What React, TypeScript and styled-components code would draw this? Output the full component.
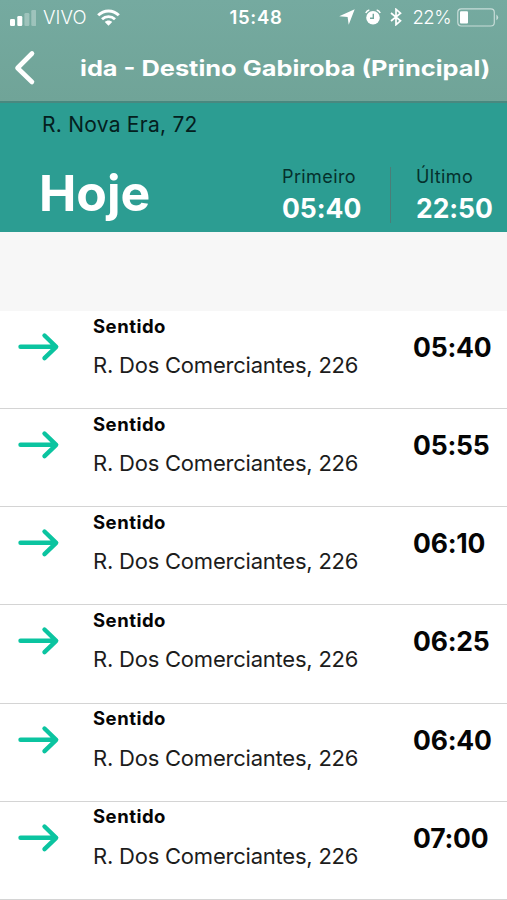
import React from "react";
import styled, { createGlobalStyle } from "styled-components";

const GlobalStyle = createGlobalStyle`
  * { box-sizing: border-box; }
  html, body { margin: 0; padding: 0; overflow: hidden; background: #fff; }
  body { font-family: Inter, "Liberation Sans", sans-serif; color: #050505; }
`;

const Screen = styled.main`
  width: 507px;
  height: 900px;
  overflow: hidden;
  background: #fff;
`;

const Header = styled.header`
  height: 103px;
  background: linear-gradient(#75aaa0, #70a498);
  border-bottom: 2px solid #49887f;
  color: #fff;
`;

const StatusBar = styled.div`
  height: 34px;
  display: grid;
  grid-template-columns: 1fr auto 1fr;
  align-items: center;
  padding: 0 8px 0 10px;
`;

const StatusGroup = styled.div<{ $end?: boolean }>`
  display: flex;
  align-items: center;
  justify-content: ${(p) => (p.$end ? "flex-end" : "flex-start")};
`;

const Carrier = styled.span`
  font-size: 18.5px;
  font-weight: 300;
  letter-spacing: 0.1px;
  margin: 0 10px 0 7px;
`;

const Clock = styled.span`
  font-size: 18.5px;
  font-weight: 600;
  letter-spacing: 0.7px;
  padding-left: 3px;
`;

const Percent = styled.span`
  font-size: 18.5px;
  font-weight: 300;
  letter-spacing: -0.5px;
  margin: 0 6px 0 10px;
`;

const NavBar = styled.div`
  height: 67px;
  display: flex;
  align-items: center;
  padding-left: 13px;
`;

const BackButton = styled.button`
  width: 24px;
  height: 40px;
  padding: 0;
  border: 0;
  background: none;
  color: inherit;
  flex: none;
`;

const Title = styled.h1`
  margin: 0 0 0 43px;
  font-size: 21.5px;
  line-height: 30px;
  font-weight: 650;
  white-space: nowrap;
  transform: scaleX(1.18);
  transform-origin: left center;
`;

const Summary = styled.section`
  height: 129px;
  background: #2c9d92;
  padding: 8px 0 0 42px;
`;

const Origin = styled.div`
  font-size: 21px;
  line-height: 28px;
  letter-spacing: 0.25px;
  color: #04201e;
`;

const SummaryRow = styled.div`
  display: flex;
  height: 93px;
`;

const Today = styled.h2`
  width: 244px;
  margin: 0 0 0 -4px;
  font-size: 50px;
  line-height: 60px;
  padding: 24px 0 0 1px;
  font-weight: 700;
  color: #fff;
`;

const Extreme = styled.div<{ $divided?: boolean }>`
  width: 79px;
  height: 56px;
  margin-top: 28px;
  ${(p) => p.$divided && "width: 110px; border-left: 1px solid #4b7d78; margin-left: 29px; padding-left: 25px;"}
`;

const ExtremeLabel = styled.div`
  padding-top: 1px;
  font-size: 18px;
  line-height: 18px;
  letter-spacing: 0.4px;
  color: #05302c;
`;

const Time = styled.div<{ $light?: boolean }>`
  font-size: 26.5px;
  line-height: 32px;
  font-weight: ${(p) => (p.$light ? 650 : 700)};
  letter-spacing: ${(p) => (p.$light ? "-0.05px" : "-0.2px")};
  color: ${(p) => (p.$light ? "#fff" : "#050505")};
  white-space: nowrap;
`;

const ExtremeTime = styled(Time)`
  margin-top: 6px;
`;

const Spacer = styled.div`
  height: 79px;
  background: #f7f7f7;
`;

const Schedule = styled.ul`
  list-style: none;
  margin: 0;
  padding: 0;
`;

const Departure = styled.li`
  height: 98.15px;
  display: grid;
  grid-template-columns: 75px 320px 1fr;
  padding-left: 18px;
  border-bottom: 1px solid #d4d4d4;
`;

const ArrowCell = styled.div`
  padding-top: 20px;
`;

const Heading = styled.div`
  padding-top: 2.5px;
  font-size: 18.5px;
  line-height: 24px;
  letter-spacing: 0.5px;
  font-weight: 700;
`;

const Street = styled.div`
  margin-top: 13.5px;
  font-size: 22px;
  line-height: 28px;
  letter-spacing: -0.22px;
  color: #1c1c1c;
  white-space: nowrap;
`;

const TimeCell = styled.div`
  padding-top: 20px;
`;

const Signal = () => (
  <svg width="26" height="17" viewBox="0 0 26 17" fill="#fff">
    <rect x="0" y="10" width="5" height="7" rx="1.3" />
    <rect x="7.3" y="7" width="5" height="10" rx="1.3" />
    <rect x="14.4" y="4" width="5" height="13" rx="1.3" opacity=".3" />
    <rect x="21.3" y="1" width="5" height="16" rx="1.3" opacity=".3" />
  </svg>
);

const Wifi = () => (
  <svg width="23" height="17" viewBox="0 0 23 17" fill="none" stroke="#fff">
    <path d="M1.2 6.3C7 .5 16 .5 21.8 6.3" strokeWidth="3" />
    <path d="M5 10.3C8.7 6.7 14.3 6.7 18 10.3" strokeWidth="2.8" />
    <path d="M7.8 13C10 11 13 11 15.2 13L11.5 16.7Z" fill="#fff" stroke="none" />
  </svg>
);

const Location = () => (
  <svg width="16" height="16" viewBox="0 0 16 16">
    <path d="M15.7.3L9.7 15.8L8.6 8L.2 7.2Z" fill="#fff" />
  </svg>
);

const Alarm = styled.svg`
  margin: 0 9px 0 10px;
`;

const AlarmIcon = () => (
  <Alarm width="16" height="17" viewBox="0 0 16 17">
    <circle cx="8" cy="8.8" r="6.8" fill="#fff" />
    <path d="M.8 4A5 5 0 0 1 4.3 1M11.7 1A5 5 0 0 1 15.2 4" stroke="#fff" strokeWidth="1.5" fill="none" />
    <path d="M8.3 4.7V9.3H5" stroke="#73a89d" strokeWidth="1.4" fill="none" />
  </Alarm>
);

const Bluetooth = () => (
  <svg width="12" height="18" viewBox="0 0 12 18" fill="none" stroke="#fff" strokeWidth="1.7">
    <path d="M1 5L10.5 12.8L6 16.7V1.3L10.5 5.2L1 13" />
  </svg>
);

const Battery = () => (
  <svg width="42" height="19" viewBox="0 0 42 19">
    <rect x=".8" y=".8" width="36.5" height="17.2" rx="3.5" fill="none" stroke="#fff" strokeWidth="1.2" opacity=".6" />
    <rect x="3" y="3.2" width="8" height="12.3" rx="1" fill="#fff" />
    <path d="M39.4 6.5Q43 9.4 39.4 12.3Z" fill="#fff" opacity=".6" />
  </svg>
);

const Arrow = () => (
  <svg width="42" height="32" viewBox="0 0 42 32" fill="none" stroke="#0bc4a0" strokeWidth="4.4" strokeLinecap="round" strokeLinejoin="round">
    <path d="M2.5 15.8H38M26.5 4.5L38.2 15.8L26.5 27.2" />
  </svg>
);

const times = ["05:40", "05:55", "06:10", "06:25", "06:40", "07:00"];

export default function App() {
  return (
    <Screen>
      <GlobalStyle />
      <Header>
        <StatusBar>
          <StatusGroup>
            <Signal />
            <Carrier>VIVO</Carrier>
            <Wifi />
          </StatusGroup>
          <Clock>15:48</Clock>
          <StatusGroup $end>
            <Location />
            <AlarmIcon />
            <Bluetooth />
            <Percent>22%</Percent>
            <Battery />
          </StatusGroup>
        </StatusBar>
        <NavBar>
          <BackButton aria-label="Voltar">
            <svg width="24" height="40" viewBox="0 0 24 40" fill="none" stroke="#fff" strokeWidth="4.6" strokeLinecap="round" strokeLinejoin="round">
              <path d="M19 5.5L4.5 20L19 34" />
            </svg>
          </BackButton>
          <Title>ida - Destino Gabiroba (Principal)</Title>
        </NavBar>
      </Header>
      <Summary>
        <Origin>R. Nova Era, 72</Origin>
        <SummaryRow>
          <Today>Hoje</Today>
          <Extreme>
            <ExtremeLabel>Primeiro</ExtremeLabel>
            <ExtremeTime $light>05:40</ExtremeTime>
          </Extreme>
          <Extreme $divided>
            <ExtremeLabel>Último</ExtremeLabel>
            <ExtremeTime $light>22:50</ExtremeTime>
          </Extreme>
        </SummaryRow>
      </Summary>
      <Spacer />
      <Schedule>
        {times.map((time) => (
          <Departure key={time}>
            <ArrowCell>
              <Arrow />
            </ArrowCell>
            <div>
              <Heading>Sentido</Heading>
              <Street>R. Dos Comerciantes, 226</Street>
            </div>
            <TimeCell>
              <Time>{time}</Time>
            </TimeCell>
          </Departure>
        ))}
      </Schedule>
    </Screen>
  );
}
